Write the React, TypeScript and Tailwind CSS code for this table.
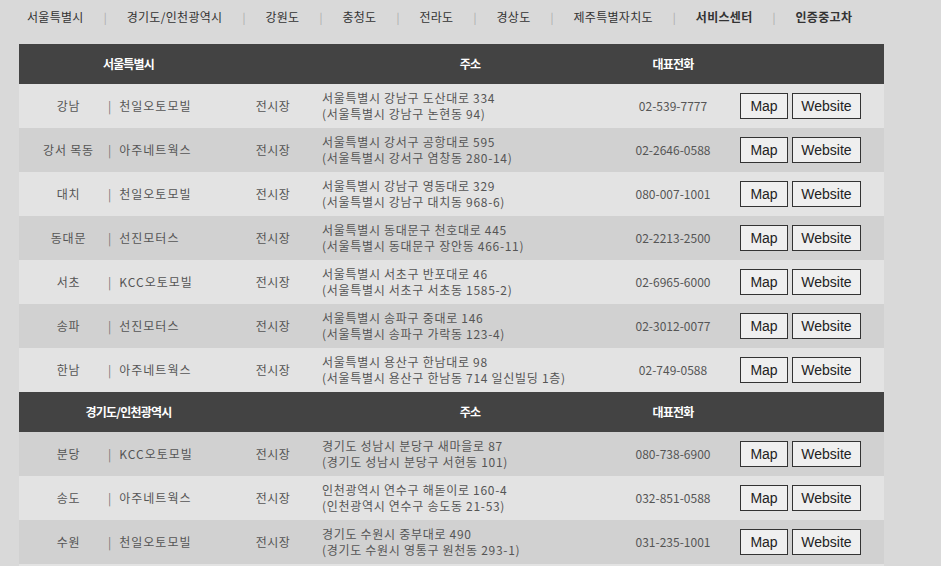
const NAV = [
  { label: "서울특별시" },
  { label: "경기도/인천광역시" },
  { label: "강원도" },
  { label: "충청도" },
  { label: "전라도" },
  { label: "경상도" },
  { label: "제주특별자치도" },
  { label: "서비스센터", bold: true },
  { label: "인증중고차", bold: true },
];

interface Dealer {
  area: string;
  name: string;
  addr: string;
  old: string;
  phone: string;
}

const SEOUL: Dealer[] = [
  { area: "강남", name: "천일오토모빌", addr: "서울특별시 강남구 도산대로 334", old: "(서울특별시 강남구 논현동 94)", phone: "02-539-7777" },
  { area: "강서 목동", name: "아주네트웍스", addr: "서울특별시 강서구 공항대로 595", old: "(서울특별시 강서구 염창동 280-14)", phone: "02-2646-0588" },
  { area: "대치", name: "천일오토모빌", addr: "서울특별시 강남구 영동대로 329", old: "(서울특별시 강남구 대치동 968-6)", phone: "080-007-1001" },
  { area: "동대문", name: "선진모터스", addr: "서울특별시 동대문구 천호대로 445", old: "(서울특별시 동대문구 장안동 466-11)", phone: "02-2213-2500" },
  { area: "서초", name: "KCC오토모빌", addr: "서울특별시 서초구 반포대로 46", old: "(서울특별시 서초구 서초동 1585-2)", phone: "02-6965-6000" },
  { area: "송파", name: "선진모터스", addr: "서울특별시 송파구 중대로 146", old: "(서울특별시 송파구 가락동 123-4)", phone: "02-3012-0077" },
  { area: "한남", name: "아주네트웍스", addr: "서울특별시 용산구 한남대로 98", old: "(서울특별시 용산구 한남동 714 일신빌딩 1층)", phone: "02-749-0588" },
];

const GYEONGGI: Dealer[] = [
  { area: "분당", name: "KCC오토모빌", addr: "경기도 성남시 분당구 새마을로 87", old: "(경기도 성남시 분당구 서현동 101)", phone: "080-738-6900" },
  { area: "송도", name: "아주네트웍스", addr: "인천광역시 연수구 해돋이로 160-4", old: "(인천광역시 연수구 송도동 21-53)", phone: "032-851-0588" },
  { area: "수원", name: "천일오토모빌", addr: "경기도 수원시 중부대로 490", old: "(경기도 수원시 영통구 원천동 293-1)", phone: "031-235-1001" },
];

function HeaderRow({ title }: { title: string }) {
  return (
    <div className="flex h-[40px] items-center bg-[#434343] text-[12px] font-bold tracking-[-0.8px] text-white">
      <div className="w-[219px] text-center">{title}</div>
      <div className="w-[70px]" />
      <div className="w-[324px] text-center">주소</div>
      <div className="w-[82px] text-center">대표전화</div>
    </div>
  );
}

function DealerRow({ d, dark }: { d: Dealer; dark: boolean }) {
  return (
    <div className={`flex h-[44px] items-center text-[12px] text-[#555] ${dark ? "bg-[#d1d1d1]" : "bg-[#e3e3e3]"}`}>
      <div className="w-[89px] pl-[10px] text-center tracking-[0.8px]">{d.area}</div>
      <div className="w-[130px] whitespace-nowrap tracking-[1px]">
        <span className="mr-[7px] text-[#777]">|</span>
        {d.name}
      </div>
      <div className="w-[70px] text-center tracking-[0.5px]">전시장</div>
      <div className="w-[324px] whitespace-nowrap pl-[14px] leading-[16px] tracking-[0.7px]">
        <div>{d.addr}</div>
        <div>{d.old}</div>
      </div>
      <div className="w-[82px] whitespace-nowrap text-center">{d.phone}</div>
      <div className="flex gap-[4px] pl-[26px] font-['Liberation_Sans',Arial,sans-serif] text-[14px] text-[#222]">
        <button className="h-[26px] w-[48px] border border-[#333] bg-[#efefef]">Map</button>
        <button className="h-[26px] w-[69px] border border-[#333] bg-[#efefef]">Website</button>
      </div>
    </div>
  );
}

export default function App() {
  return (
    <div className="h-[566px] w-[941px] overflow-hidden bg-[#d9d9d9] font-['Noto_Sans_CJK_KR','Noto_Sans',sans-serif]">
      <nav className="flex h-[34px] items-center pl-[27px] text-[12px] text-[#333]">
        {NAV.map((n, i) => (
          <div key={n.label} className="flex items-center">
            {i > 0 && <span className="px-[20px] text-[11px] text-[#aaa]">|</span>}
            <span className={`tracking-[0.3px] ${n.bold ? "font-bold" : ""}`}>{n.label}</span>
          </div>
        ))}
      </nav>
      <div className="ml-[19px] mt-[10px] w-[865px]">
        <HeaderRow title="서울특별시" />
        {SEOUL.map((d, i) => (
          <DealerRow key={d.area} d={d} dark={i % 2 === 1} />
        ))}
        <HeaderRow title="경기도/인천광역시" />
        {GYEONGGI.map((d, i) => (
          <DealerRow key={d.area} d={d} dark={i % 2 === 0} />
        ))}
        <div className="h-[44px] bg-[#e3e3e3]" />
      </div>
    </div>
  );
}
